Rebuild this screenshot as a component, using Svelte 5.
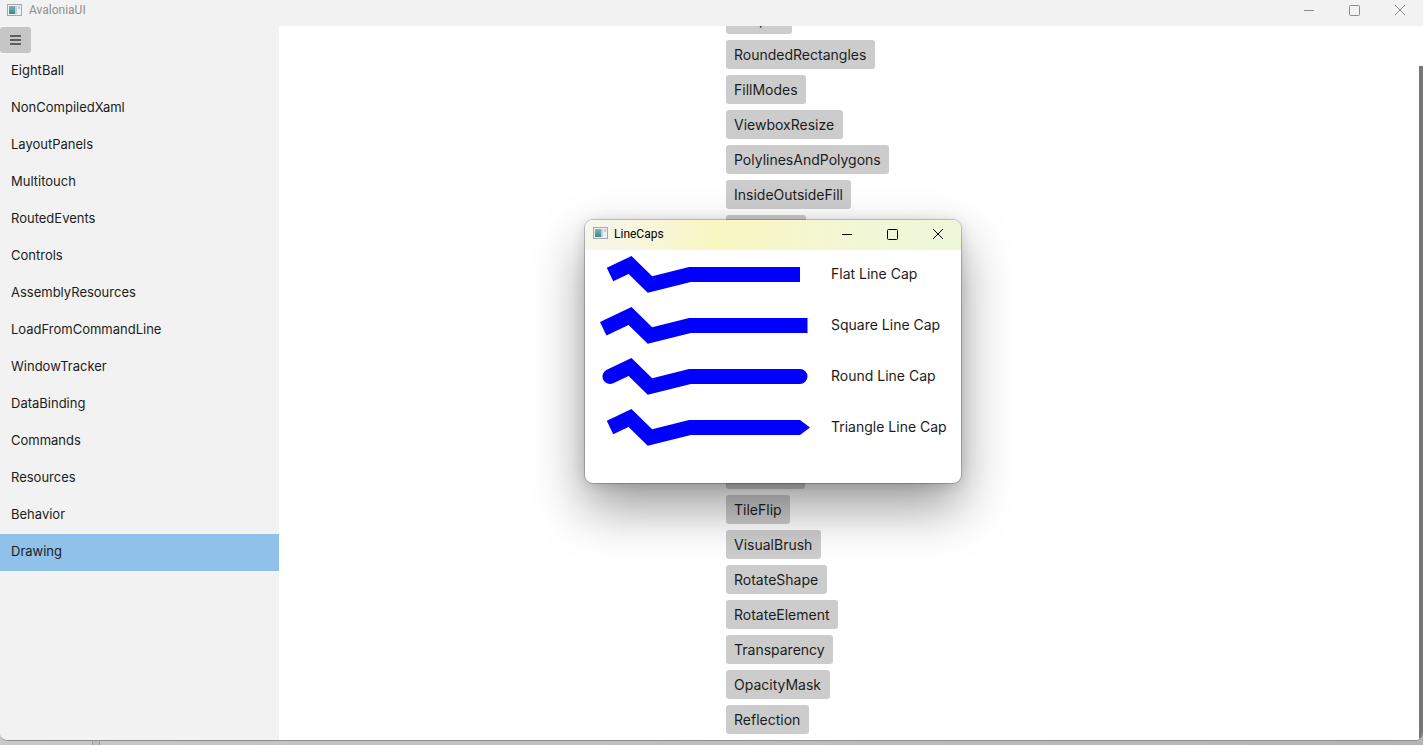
<script>
	const samples = [
		'EightBall', 'NonCompiledXaml', 'LayoutPanels', 'Multitouch', 'RoutedEvents', 'Controls',
		'AssemblyResources', 'LoadFromCommandLine', 'WindowTracker', 'DataBinding', 'Commands',
		'Resources', 'Behavior', 'Drawing'
	];
	const demos = [
		'Shapes', 'RoundedRectangles', 'FillModes', 'ViewboxResize', 'PolylinesAndPolygons',
		'InsideOutsideFill', 'LineJoins', 'LineCaps', 'DashedLines', 'Brushes', 'Gradients',
		'RadialGradient', 'ImageBrush', 'TileBrush', 'TileFlip', 'VisualBrush', 'RotateShape',
		'RotateElement', 'Transparency', 'OpacityMask', 'Reflection'
	];
	const caps = [
		{ label: 'Flat Line Cap', cap: 'butt' },
		{ label: 'Square Line Cap', cap: 'square' },
		{ label: 'Round Line Cap', cap: 'round' },
		{ label: 'Triangle Line Cap', cap: 'butt', tip: true }
	];
	// stroke points of the sample line, in row coordinates
	const points = '25,24.5 45,15 65,34.5 105,24.5 215,24.5';
</script>

{#snippet appIcon()}
	<svg class="app-icon" width="15" height="12" viewBox="0 0 15 12">
		<defs>
			<linearGradient id="pane" x1="0" y1="0" x2="0" y2="1">
				<stop offset="0" stop-color="#7fb0c4" />
				<stop offset="1" stop-color="#3f8a78" />
			</linearGradient>
		</defs>
		<rect x="0.5" y="0.5" width="14" height="11" fill="#eef1f4" stroke="#a4a8ac" />
		<rect x="2" y="2" width="6" height="8" fill="url(#pane)" />
		<rect x="8" y="2" width="2" height="8" fill="#c4ced8" />
		<rect x="11" y="2" width="2" height="3" fill="#c0cad4" />
	</svg>
{/snippet}

<div class="app">
	<header class="titlebar">
		{@render appIcon()}
		<span class="title">AvaloniaUI</span>
		<div class="controls">
			<svg width="46" height="20" viewBox="0 0 46 20"><path d="M19 10.5h10" /></svg>
			<svg width="46" height="20" viewBox="0 0 46 20"><rect x="18.5" y="5.5" width="10" height="10" rx="1" /></svg>
			<svg width="46" height="20" viewBox="0 0 46 20"><path d="M18 5l10 10M28 5l-10 10" /></svg>
		</div>
	</header>

	<div class="body">
		<aside class="sidebar">
			<button class="hamburger" aria-label="menu">
				<svg width="11" height="10" viewBox="0 0 11 10"><path d="M0 1h11M0 5h11M0 9h11" /></svg>
			</button>
			{#each samples as sample}
				<div class="sample" class:active={sample === 'Drawing'}>{sample}</div>
			{/each}
		</aside>

		<main class="content">
			<div class="demos">
				{#each demos as demo}
					<button class="demo">{demo}</button>
				{/each}
			</div>
			<div class="scrollbar"></div>
		</main>
	</div>

	<section class="dialog">
		<header class="dialog-title">
			{@render appIcon()}
			<span>LineCaps</span>
			<div class="dialog-controls">
				<svg width="46" height="20" viewBox="0 0 46 20"><path d="M19 10.5h10" /></svg>
				<svg width="46" height="20" viewBox="0 0 46 20"><rect x="18.5" y="5.5" width="10" height="10" rx="1" /></svg>
				<svg width="46" height="20" viewBox="0 0 46 20"><path d="M18 5l10 10M28 5l-10 10" /></svg>
			</div>
		</header>
		<div class="rows">
			{#each caps as row}
				<div class="row">
					<svg class="line" width="246" height="49" viewBox="0 0 246 49">
						<polyline {points} fill="none" stroke="#0000ff" stroke-width="15" stroke-linecap={row.cap} stroke-linejoin="miter" />
						{#if row.tip}
							<polygon points="215,17 225,24.5 215,32" fill="#0000ff" />
						{/if}
					</svg>
					<span class="cap-label">{row.label}</span>
				</div>
			{/each}
		</div>
	</section>
</div>
<div class="taskbar-tab"></div>

<style>
	:global(body) {
		background: linear-gradient(90deg, #c8c8c8, #b4b4b4);
		font-family: Inter, sans-serif;
		overflow: hidden;
	}
	.app {
		position: relative;
		height: 740px;
		display: flex;
		flex-direction: column;
		background: #f2f2f2;
		border-bottom: 1px solid #8c8c8c;
		border-radius: 0 0 8px 8px;
		overflow: hidden;
		box-sizing: content-box;
	}
	.titlebar {
		height: 26px;
		flex: none;
		display: flex;
		align-items: center;
		padding-left: 7px;
		padding-bottom: 6px;
		box-sizing: border-box;
	}
	.app-icon {
		flex: none;
	}
	.title {
		margin-left: 7px;
		font-family: Roboto, sans-serif;
		font-size: 12px;
		color: #8f8f8f;
	}
	.controls {
		margin-left: auto;
		display: flex;
	}
	.controls svg {
		fill: none;
		stroke: #8c8c8c;
		stroke-width: 1;
	}
	.body {
		flex: 1;
		display: flex;
		min-height: 0;
	}
	.sidebar {
		width: 279px;
		flex: none;
		background: #f2f2f2;
		padding-top: 1px;
	}
	.hamburger {
		display: flex;
		align-items: center;
		justify-content: center;
		width: 31px;
		height: 26px;
		padding: 0;
		border: none;
		border-radius: 3px;
		background: #c6c6c6;
	}
	.hamburger svg {
		fill: none;
		stroke: #5f5f5f;
		stroke-width: 2;
	}
	.sample {
		height: 37px;
		line-height: 35px;
		padding-left: 11px;
		font-size: 13px;
		color: #1c1c1c;
	}
	.sample.active {
		background: #8fc1e9;
	}
	.content {
		position: relative;
		flex: 1;
		background: #fff;
		overflow: hidden;
		padding-left: 447px;
	}
	.demos {
		display: flex;
		flex-direction: column;
		align-items: flex-start;
		gap: 6px;
		margin-top: -21px;
	}
	.demo {
		flex: none;
		height: 29px;
		padding: 0 8.5px 0 8px;
		border: none;
		border-radius: 3px;
		background: #cccccc;
		color: #1c1c1c;
		font-family: Inter, sans-serif;
		font-size: 14px;
	}
	.scrollbar {
		position: absolute;
		right: 0;
		top: 40px;
		bottom: 0;
		width: 4px;
		background: #767676;
	}
	.dialog {
		position: absolute;
		left: 585px;
		top: 220px;
		width: 376px;
		height: 263px;
		background: #fff;
		border-radius: 8px;
		overflow: hidden;
		box-shadow: 0 0 0 1px rgba(0, 0, 0, 0.2), 0 24px 52px rgba(0, 0, 0, 0.4), 0 2px 14px rgba(0, 0, 0, 0.14);
	}
	.dialog-title {
		height: 30px;
		display: flex;
		align-items: center;
		padding-left: 8px;
		padding-bottom: 2px;
		box-sizing: border-box;
		font-family: Roboto, sans-serif;
		font-size: 12px;
		color: #000;
		background: linear-gradient(90deg, #f6f6ee 0%, #f9f6c2 35%, #f1f7d6 75%, #eff7da 100%);
	}
	.dialog-title .app-icon {
		margin-top: -2px;
	}
	.dialog-title span {
		margin-left: 6px;
	}
	.dialog-controls {
		margin-left: auto;
		display: flex;
	}
	.dialog-controls svg {
		fill: none;
		stroke: #000;
		stroke-width: 1;
	}
	.rows {
		display: flex;
		flex-direction: column;
		gap: 2px;
	}
	.row {
		height: 49px;
		display: flex;
		align-items: center;
		font-size: 14px;
		color: #1c1c1c;
	}
	.line {
		flex: none;
	}
	.cap-label {
		margin-bottom: 2px;
	}
	.taskbar-tab {
		position: absolute;
		left: 92px;
		top: 741px;
		width: 6px;
		height: 4px;
		background: #bcbcc8;
		border: solid #9c9ca4;
		border-width: 0 1px;
	}
</style>
